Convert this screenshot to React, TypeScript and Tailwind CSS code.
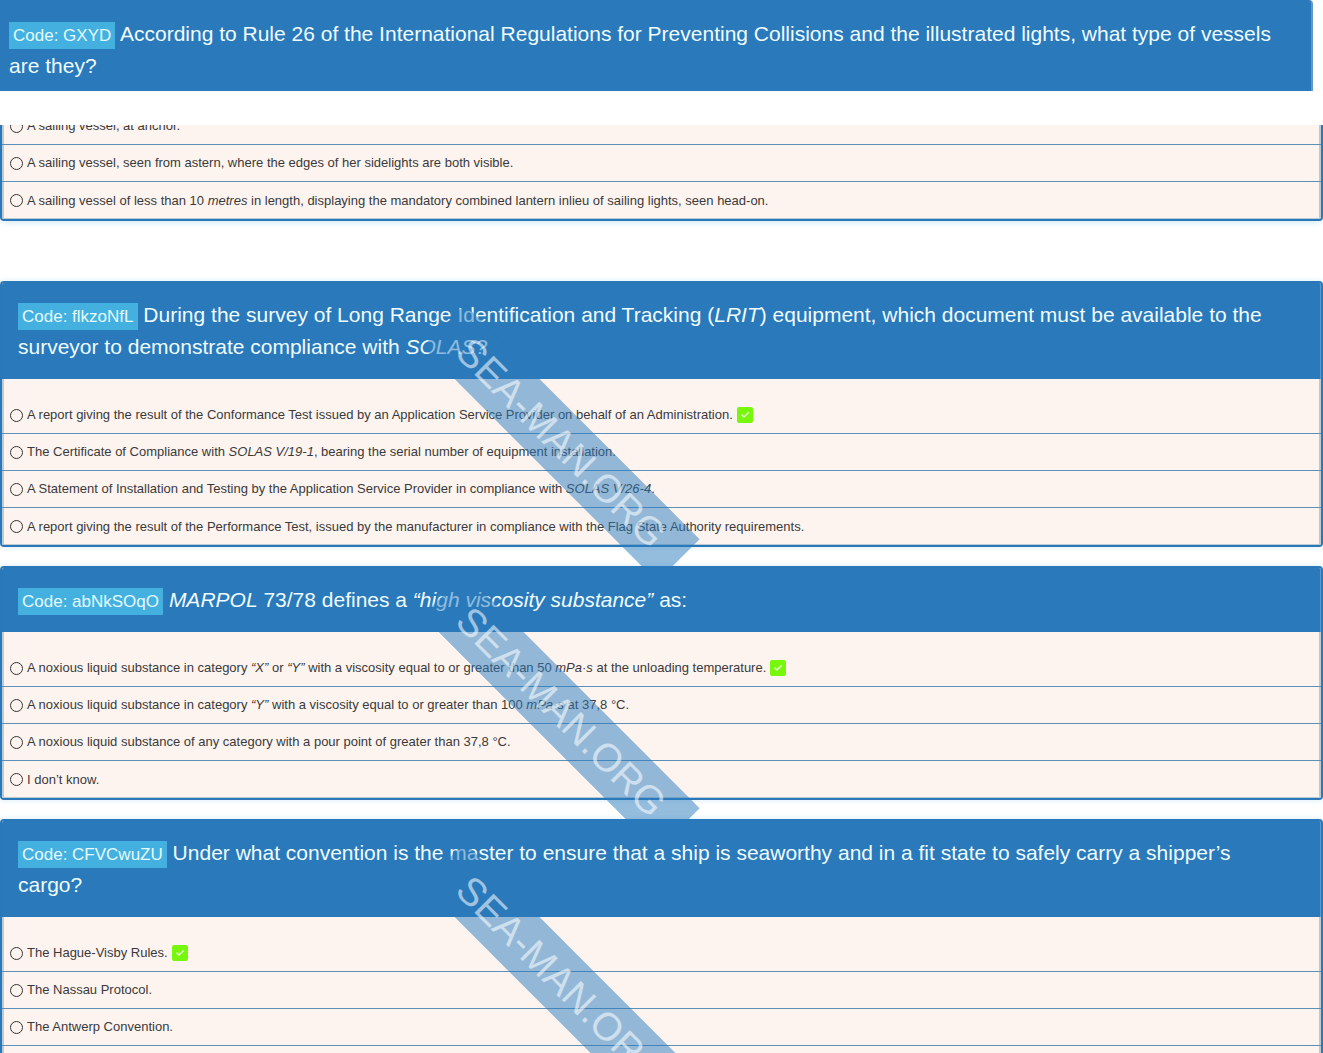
import type { ReactNode } from "react";
import clsx from "clsx";

interface Answer {
  text: ReactNode;
  correct?: boolean;
}

interface Question {
  code: string;
  title: ReactNode;
  answers: Answer[];
}

const sailingAnswers: Answer[] = [
  { text: "A sailing vessel, at anchor." },
  {
    text: "A sailing vessel, seen from astern, where the edges of her sidelights are both visible.",
  },
  {
    text: (
      <>
        A sailing vessel of less than 10 <em>metres</em> in length, displaying
        the mandatory combined lantern inlieu of sailing lights, seen head-on.
      </>
    ),
  },
];

const questions: Question[] = [
  {
    code: "flkzoNfL",
    title: (
      <>
        During the survey of Long Range Identification and Tracking (
        <em>LRIT</em>) equipment, which document must be available to the
        surveyor to demonstrate compliance with <em>SOLAS?</em>
      </>
    ),
    answers: [
      {
        text: "A report giving the result of the Conformance Test issued by an Application Service Provider on behalf of an Administration.",
        correct: true,
      },
      {
        text: (
          <>
            The Certificate of Compliance with <em>SOLAS V/19-1</em>, bearing
            the serial number of equipment installation.
          </>
        ),
      },
      {
        text: (
          <>
            A Statement of Installation and Testing by the Application Service
            Provider in compliance with <em>SOLAS V/26-4</em>.
          </>
        ),
      },
      {
        text: "A report giving the result of the Performance Test, issued by the manufacturer in compliance with the Flag State Authority requirements.",
      },
    ],
  },
  {
    code: "abNkSOqO",
    title: (
      <>
        <em>MARPOL</em> 73/78 defines a <em>“high viscosity substance”</em> as:
      </>
    ),
    answers: [
      {
        text: (
          <>
            A noxious liquid substance in category <em>“X”</em> or <em>“Y”</em>{" "}
            with a viscosity equal to or greater than 50 <em>mPa·s</em> at the
            unloading temperature.
          </>
        ),
        correct: true,
      },
      {
        text: (
          <>
            A noxious liquid substance in category <em>“Y”</em> with a viscosity
            equal to or greater than 100 <em>mPa·s</em> at 37,8 °C.
          </>
        ),
      },
      {
        text: "A noxious liquid substance of any category with a pour point of greater than 37,8 °C.",
      },
      { text: "I don’t know." },
    ],
  },
  {
    code: "CFVCwuZU",
    title:
      "Under what convention is the master to ensure that a ship is seaworthy and in a fit state to safely carry a shipper’s cargo?",
    answers: [
      { text: "The Hague-Visby Rules.", correct: true },
      { text: "The Nassau Protocol." },
      { text: "The Antwerp Convention." },
    ],
  },
];

function CodeLabel({ code }: { code: string }) {
  return (
    <span className="bg-[#43b0e0] p-1 text-[17px] leading-5 text-[#e4fbff]">
      Code: {code}
    </span>
  );
}

function CheckMark() {
  return (
    <svg viewBox="0 0 16 16" className="size-4 shrink-0" aria-hidden="true">
      <rect width="16" height="16" rx="2" fill="#76f70c" />
      <path
        d="M4.5 7.6 7 10 11.8 5.2"
        fill="none"
        stroke="#e0ffc4"
        strokeWidth="1.6"
      />
    </svg>
  );
}

function AnswerList({
  name,
  answers,
  open,
}: {
  name: string;
  answers: Answer[];
  open?: boolean;
}) {
  return (
    <ul>
      {answers.map((answer, i) => (
        <li
          key={i}
          className={clsx(
            "h-[37px] border-[#5c90b8]",
            (open || i < answers.length - 1) && "border-b",
          )}
        >
          <label className="flex h-full items-center gap-1 pl-2 text-[13px] text-[#3a3a3a]">
            <input
              type="radio"
              name={name}
              className="size-[13px] shrink-0 appearance-none rounded-full border border-[#333] checked:border-4"
            />
            <span>{answer.text}</span>
            {answer.correct && <CheckMark />}
          </label>
        </li>
      ))}
    </ul>
  );
}

function QuestionCard({ question, open }: { question: Question; open?: boolean }) {
  return (
    <section
      className={clsx(
        "overflow-hidden border-2 border-[#2b78b8] bg-[#fdf4f0] shadow-[0_0_6px_#d3ebf5]",
        open ? "min-h-0 flex-1 rounded-t-sm border-b-0" : "shrink-0 rounded-sm",
      )}
    >
      <h2 className="border-r border-[#5f99c9] bg-[#2979bb] py-4 pr-6 pl-4 text-[21px] leading-8 text-[#f0fcff]">
        <CodeLabel code={question.code} /> {question.title}
      </h2>
      <div
        className={clsx(
          "pt-[18px]",
          open
            ? "h-full shadow-[inset_2px_0_0_#bccad4,inset_-2px_0_0_#bccad4]"
            : "shadow-[inset_2px_-1px_0_#bccad4,inset_-2px_-1px_0_#bccad4]",
        )}
      >
        <AnswerList name={question.code} answers={question.answers} open={open} />
      </div>
    </section>
  );
}

function Watermark() {
  return (
    <div
      className="pointer-events-none absolute top-[413px] left-[395px] flex flex-col gap-[209px]"
      aria-hidden="true"
    >
      {[0, 1, 2].map((i) => (
        <div
          key={i}
          className="flex h-[60px] w-[332px] rotate-45 items-center justify-center bg-[#2979bb]/50 text-[39px] whitespace-nowrap text-white/55"
        >
          SEA-MAN.ORG
        </div>
      ))}
    </div>
  );
}

export default function App() {
  return (
    <main className="relative flex h-screen flex-col overflow-hidden bg-white font-['Liberation_Sans',Arial,sans-serif]">
      <h2 className="mr-[10px] shrink-0 rounded-tr-sm border-r-2 border-[#5f99c9] bg-[#2979bb] px-[9px] pt-[18px] pb-[9px] text-[21px] leading-8 text-[#f0fcff]">
        <CodeLabel code="GXYD" /> According to Rule 26 of the International
        Regulations for Preventing Collisions and the illustrated lights, what
        type of vessels are they?
      </h2>

      {/* answers scrolled half under the heading */}
      <section className="mt-[34px] flex h-24 shrink-0 flex-col justify-end overflow-hidden rounded-b-sm border-2 border-t-0 border-[#2b78b8] bg-[#fdf4f0] shadow-[0_4px_6px_-2px_#d3ebf5]">
        <div className="shadow-[inset_2px_-1px_0_#bccad4,inset_-2px_-1px_0_#bccad4]">
          <AnswerList name="GXYD" answers={sailingAnswers} />
        </div>
      </section>

      <div className="mt-[60px] flex min-h-0 flex-1 flex-col gap-[19px]">
        {questions.map((q, i) => (
          <QuestionCard
            key={q.code}
            question={q}
            open={i === questions.length - 1}
          />
        ))}
      </div>

      <Watermark />
    </main>
  );
}
